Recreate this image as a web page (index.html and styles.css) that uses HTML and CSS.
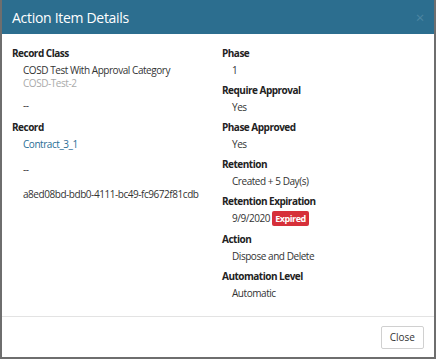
FILE: index.html
```html
<!DOCTYPE html>
<html lang="en">
<head>
  <meta charset="UTF-8">
  <title>Action Item Details</title>
  <link rel="stylesheet" href="styles.css">
</head>
<body>
  <div class="modal">
    <div class="modal-header">
      <h1>Action Item Details</h1>
      <span class="close-x">&times;</span>
    </div>

    <div class="modal-body">
      <div class="col">
        <div class="label">Record Class</div>
        <div class="value">COSD Test With Approval Category</div>
        <div class="value sub">COSD-Test-2</div>
        <div class="value gap">--</div>

        <div class="label">Record</div>
        <div class="value"><a href="#">Contract_3_1</a></div>
        <div class="value gap">--</div>
        <div class="value gap">a8ed08bd-bdb0-4111-bc49-fc9672f81cdb</div>
      </div>

      <div class="col">
        <div class="label">Phase</div>
        <div class="value">1</div>
        <div class="label">Require Approval</div>
        <div class="value">Yes</div>
        <div class="label">Phase Approved</div>
        <div class="value">Yes</div>
        <div class="label">Retention</div>
        <div class="value">Created + 5 Day(s)</div>
        <div class="label">Retention Expiration</div>
        <div class="value">9/9/2020 <span class="badge">Expired</span></div>
        <div class="label">Action</div>
        <div class="value">Dispose and Delete</div>
        <div class="label">Automation Level</div>
        <div class="value">Automatic</div>
      </div>
    </div>

    <div class="modal-footer">
      <button class="btn">Close</button>
    </div>
  </div>
</body>
</html>
```

FILE: styles.css
```css
html, body {
  margin: 0;
  padding: 0;
}

body {
  font-family: "Open Sans", Arial, sans-serif;
  font-size: 10px;
  letter-spacing: -0.45px;
  color: #333;
  background: #fff;
}

.modal {
  width: 436px;
  height: 359px;
  box-sizing: border-box;
  border-left: 2px solid #6e6e6e;
  border-right: 2px solid #6e6e6e;
  border-bottom: 2px solid #6e6e6e;
  display: flex;
  flex-direction: column;
}

.modal-header {
  background-color: #2c6e8f;
  height: 34px;
  display: flex;
  align-items: center;
  justify-content: space-between;
  padding: 0 10px 0 10px;
}

.modal-header h1 {
  margin: 0;
  font-size: 14px;
  font-weight: normal;
  letter-spacing: -0.3px;
  color: #fff;
}

.close-x {
  color: #4d86a2;
  font-size: 15px;
}

.modal-body {
  flex: 1;
  display: grid;
  grid-template-columns: 210px 1fr;
  padding: 11px 10px 0 10px;
}

.label {
  font-weight: bold;
  color: #222;
  line-height: 16px;
  letter-spacing: -0.5px;
}

.value {
  padding-left: 11px;
  line-height: 18px;
  margin-bottom: 3px;
}

.col + .col .value {
  padding-left: 10px;
}

.value.sub {
  color: #aaa;
  line-height: 12px;
  margin-top: -5px;
}

.value.gap {
  margin-top: 7px;
  margin-bottom: 5px;
}

a {
  color: #2a6e95;
  text-decoration: none;
}

.badge {
  background-color: #d6303a;
  color: #fff;
  font-weight: bold;
  font-size: 9px;
  padding: 1px 3px;
  border-radius: 2px;
}

.modal-footer {
  border-top: 1px solid #e3e3e3;
  height: 40px;
  display: flex;
  align-items: center;
  justify-content: flex-end;
  padding-right: 10px;
}

.btn {
  font-family: "Open Sans", Arial, sans-serif;
  font-size: 10px;
  color: #333;
  background: #fff;
  border: 1px solid #d0d0d0;
  border-radius: 2px;
  height: 23px;
  padding: 0 8px;
}
```
